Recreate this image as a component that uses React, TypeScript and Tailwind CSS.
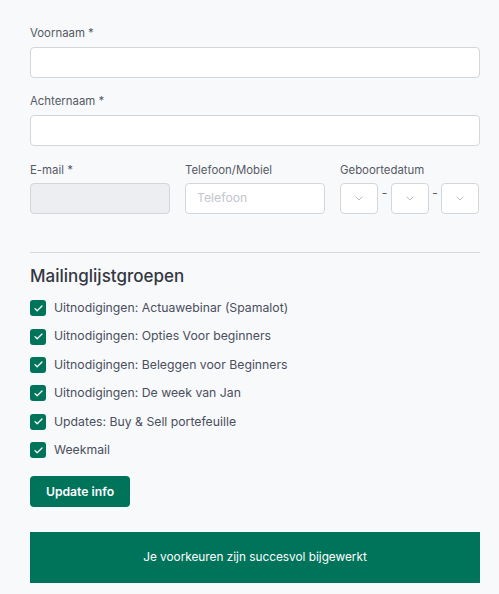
import React from "react";

const groups = [
  "Uitnodigingen: Actuawebinar (Spamalot)",
  "Uitnodigingen: Opties Voor beginners",
  "Uitnodigingen: Beleggen voor Beginners",
  "Uitnodigingen: De week van Jan",
  "Updates: Buy & Sell portefeuille",
  "Weekmail",
];

const Chevron = () => (
  <svg width="8" height="5" viewBox="0 0 8 5" fill="none">
    <path d="M1 1l3 3 3-3" stroke="#b8bcc4" strokeWidth="1" strokeLinecap="round" strokeLinejoin="round" />
  </svg>
);

const SelectBox = () => (
  <div className="w-[38px] h-[31px] rounded-[4px] border border-[#d3d6db] bg-white flex items-center justify-center">
    <Chevron />
  </div>
);

const Field = ({ label, className = "" }: { label: string; className?: string }) => (
  <div className={className}>
    <div className="text-[11.4px] leading-[16px] text-[#555a63]">{label}</div>
    <div className="mt-[6px] h-[31px] w-full rounded-[4px] border border-[#d3d6db] bg-white"></div>
  </div>
);

export default function App() {
  return (
    <div
      className="h-[594px] overflow-hidden bg-[#f8f9fb] pl-[30px] pr-[19px] pt-[25px] text-[#3f4450]"
      style={{ fontFamily: "Inter, 'Noto Sans', sans-serif" }}
    >
      <Field label="Voornaam *" />
      <Field label="Achternaam *" className="mt-[15px]" />

      <div className="mt-[16px] flex items-start">
        <div className="w-[140px]">
          <div className="text-[11.4px] leading-[16px] text-[#555a63]">E-mail *</div>
          <div className="mt-[5px] h-[31px] rounded-[4px] border border-[#d3d6db] bg-[#eceef1]"></div>
        </div>
        <div className="ml-[15px] w-[140px]">
          <div className="text-[11.4px] leading-[16px] text-[#555a63]">Telefoon/Mobiel</div>
          <div className="mt-[5px] h-[31px] rounded-[4px] border border-[#d3d6db] bg-white flex items-center px-[11px] text-[12.25px] text-[#c2c6cd]">
            Telefoon
          </div>
        </div>
        <div className="ml-[15px] flex-1">
          <div className="text-[11.4px] leading-[16px] text-[#555a63]">Geboortedatum</div>
          <div className="mt-[5px] flex items-start">
            <SelectBox />
            <span className="w-[13px] text-center text-[12px] leading-[20px] text-[#555a63]">-</span>
            <SelectBox />
            <span className="w-[12px] text-center text-[12px] leading-[20px] text-[#555a63]">-</span>
            <SelectBox />
          </div>
        </div>
      </div>

      <div className="mt-[38px] h-px bg-[#d6d9de]"></div>

      <h2 className="mt-[11px] text-[17px] leading-[24px] font-medium text-[#33373f]">Mailinglijstgroepen</h2>

      <div className="mt-[6px]">
        {groups.map((g) => (
          <div key={g} className="h-[28.4px] flex items-center">
            <div className="w-[16px] h-[16px] rounded-[3px] bg-[#00745a] flex items-center justify-center">
              <svg width="9" height="7" viewBox="0 0 9 7" fill="none">
                <path d="M1 3.6l2.2 2.2L8 1" stroke="white" strokeWidth="1.3" strokeLinecap="round" strokeLinejoin="round" />
              </svg>
            </div>
            <span className="ml-[8px] text-[12.25px] text-[#4a4f5c]">{g}</span>
          </div>
        ))}
      </div>

      <button className="mt-[12px] h-[31px] w-[100px] rounded-[4px] bg-[#00745a] text-[12.2px] font-semibold text-white">
        Update info
      </button>

      <div className="mt-[25px] h-[51px] bg-[#00745a] flex items-center justify-center text-[11.8px] text-white">
        Je voorkeuren zijn succesvol bijgewerkt
      </div>
    </div>
  );
}
